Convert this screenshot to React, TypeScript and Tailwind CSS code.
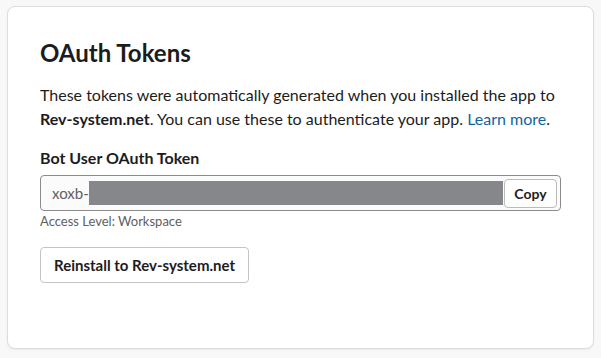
export default function App() {
  return (
    <div className="min-h-[358px] w-[601px] bg-[#f8f8f8] px-[7px] pt-[6px]" style={{ fontFamily: "Lato, 'Noto Sans', sans-serif" }}>
      <div className="h-[343px] rounded-[8px] border border-[#dddddd] bg-white pl-[32px] pr-[24px] pt-[30px] text-[#1d1c1d] shadow-[0_1px_2px_rgba(0,0,0,0.06)]">
        <h1 className="text-[24px] font-bold leading-[31px]">OAuth Tokens</h1>
        <p className="mt-[15px] text-[16px] leading-[24px]">
          These tokens were automatically generated when you installed the app to{" "}
          <span className="font-bold">Rev-system.net</span>. You can use these to authenticate your app.{" "}
          <span className="text-[#1264a3]">Learn more</span>.
        </p>
        <div className="mt-[16px] text-[16px] font-bold leading-[22px]">Bot User OAuth Token</div>
        <div className="mt-[6px] flex h-[36px] w-[521px] items-center rounded-[4px] border border-[#8b8b8b] bg-[#fbfbfb] pl-[11px] pr-[3px]">
          <span className="text-[15px] text-[#616061]">xoxb-</span>
          <div className="h-[24px] flex-1 bg-[#86878b]" />
          <button className="ml-[1px] flex h-[29px] w-[53px] items-center justify-center rounded-[4px] border border-[#bbbbbb] bg-white text-[14px] font-bold text-[#1d1c1d]">
            Copy
          </button>
        </div>
        <div className="mt-[1px] text-[13px] leading-[18px] text-[#616061]">Access Level: Workspace</div>
        <button className="mt-[17px] flex h-[36px] w-[209px] items-center justify-center rounded-[4px] border border-[#c4c4c4] bg-white text-[15px] font-bold text-[#1d1c1d]">
          Reinstall to Rev-system.net
        </button>
      </div>
    </div>
  );
}
